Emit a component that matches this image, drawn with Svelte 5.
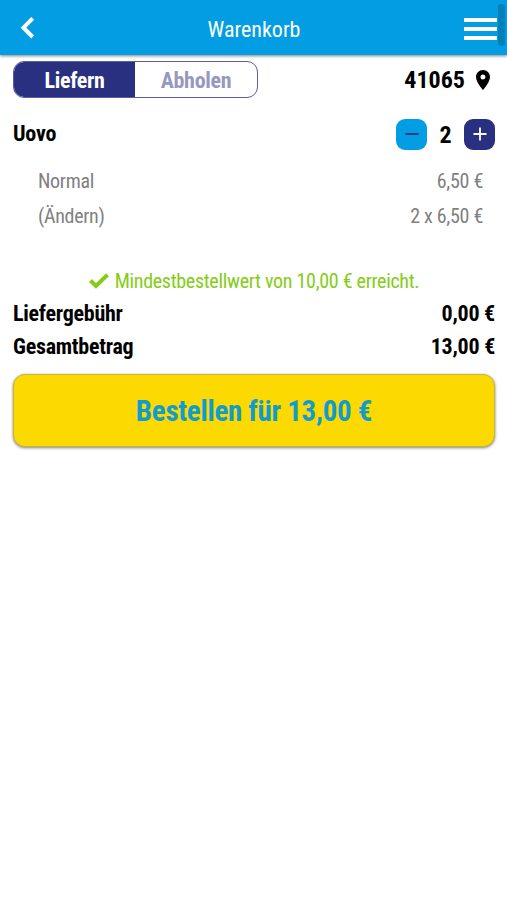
<script>
  let price = 6.5
  let count = $state(2)
  let mode = $state('deliver')
  let total = $derived(count * price)

  function euro(value) {
    return value.toFixed(2).replace('.', ',') + ' €'
  }
</script>

<div class="page">
  <header>
    <button class="back" aria-label="Zurück">
      <svg width="15" height="22" viewBox="0 0 15 22">
        <path d="M12.7 1.3L3.5 10.7L12.7 20" fill="none" stroke="#fff" stroke-width="4" />
      </svg>
    </button>
    <h1>Warenkorb</h1>
    <button class="menu" aria-label="Menü">
      <span></span>
      <span></span>
      <span></span>
    </button>
    <div class="scrollbar"></div>
  </header>

  <main>
    <div class="top">
      <div class="switch">
        <button class:active={mode == 'deliver'} onclick={() => mode = 'deliver'}>Liefern</button>
        <button class:active={mode == 'pickup'} onclick={() => mode = 'pickup'}>Abholen</button>
      </div>
      <div class="zip">
        <span>41065</span>
        <svg width="14" height="20" viewBox="5 2 14 20" preserveAspectRatio="none">
          <path d="M12 2C8.13 2 5 5.13 5 9c0 5.25 7 13 7 13s7-7.75 7-13c0-3.87-3.13-7-7-7zm0 9.5a2.5 2.5 0 1 1 0-5 2.5 2.5 0 0 1 0 5z" />
        </svg>
      </div>
    </div>

    <div class="item">
      <span class="name">Uovo</span>
      <div class="stepper">
        <button class="minus" aria-label="Weniger" onclick={() => count = Math.max(0, count - 1)}>
          <svg width="14" height="14" viewBox="0 0 14 14"><path d="M.5 7H13.5" /></svg>
        </button>
        <span class="count">{count}</span>
        <button class="plus" aria-label="Mehr" onclick={() => count++}>
          <svg width="14" height="14" viewBox="0 0 14 14"><path d="M.5 7H13.5M7 .5V13.5" /></svg>
        </button>
      </div>
    </div>
    <div class="detail">
      <span>Normal</span>
      <span>{euro(price)}</span>
    </div>
    <div class="detail">
      <span>(Ändern)</span>
      <span>{count} x {euro(price)}</span>
    </div>

    <div class="notice">
      <svg width="20" height="16" viewBox="0 0 20 16">
        <path d="M1.5 7.5L7 13L18.5 1.8" fill="none" stroke="#84cc16" stroke-width="4" />
      </svg>
      <span>Mindestbestellwert von 10,00 € erreicht.</span>
    </div>

    <div class="sum">
      <span>Liefergebühr</span>
      <span>{euro(0)}</span>
    </div>
    <div class="sum">
      <span>Gesamtbetrag</span>
      <span>{euro(total)}</span>
    </div>

    <button class="order">Bestellen für {euro(total)}</button>
  </main>
</div>

<style>
  :global(body) {
    background: #fff;
  }

  .page {
    min-height: 100vh;
    font-family: 'Roboto Condensed', Roboto, sans-serif;
    font-stretch: condensed;
    color: #000;
  }

  button {
    padding: 0;
    border: 0;
    background: none;
    font: inherit;
    letter-spacing: inherit;
    cursor: pointer;
  }

  svg {
    display: block;
  }

  header {
    position: relative;
    display: grid;
    grid-template-columns: 60px 1fr 60px;
    align-items: center;
    height: 55px;
    background: #029de2;
    box-shadow: 0 1px 3px rgba(0, 0, 0, 0.5);
  }

  .back {
    padding: 1px 0 0 20px;
    justify-self: start;
  }

  h1 {
    margin: 0;
    padding: 4px 0 0 1px;
    color: #fff;
    font-size: 22px;
    font-weight: 400;
    line-height: 26px;
    text-align: center;
  }

  .menu {
    display: flex;
    flex-direction: column;
    gap: 5px;
    width: 33px;
    margin: 2px 0 0 17px;
  }

  .menu span {
    height: 4px;
    background: #fff;
  }

  .scrollbar {
    position: absolute;
    top: 4px;
    right: 2px;
    width: 7px;
    height: 42px;
    border-radius: 3px;
    background: #0280b9;
  }

  main {
    padding: 6px 12px 0 13px;
  }

  .top,
  .item,
  .detail,
  .sum {
    display: flex;
    justify-content: space-between;
    align-items: center;
  }

  .switch {
    display: grid;
    grid-template-columns: 121px 1fr;
    box-sizing: border-box;
    width: 245px;
    height: 37px;
    border: 1px solid #5d5c9e;
    border-radius: 11px;
    overflow: hidden;
    letter-spacing: -0.3px;
  }

  .switch button {
    padding-top: 2px;
    color: #9698bf;
    font-size: 22px;
    font-weight: 700;
  }

  .switch .active {
    background: #28307f;
    color: #fff;
  }

  .zip {
    display: flex;
    align-items: center;
    gap: 11px;
    padding-right: 5px;
    font-size: 24px;
    font-weight: 700;
  }

  .item {
    height: 32px;
    margin-top: 20px;
    font-size: 22px;
    font-weight: 700;
  }

  .name {
    padding-bottom: 2px;
    letter-spacing: -0.2px;
  }

  .stepper {
    display: flex;
    align-items: center;
  }

  .stepper button {
    display: grid;
    place-items: center;
    width: 31px;
    height: 31px;
    border-radius: 9px;
  }

  .minus {
    background: #029de2;
    stroke: #28307f;
  }

  .plus {
    background: #28307f;
    stroke: #fff;
  }

  .stepper path {
    stroke-width: 1.8;
  }

  .count {
    width: 37px;
    padding-top: 2px;
    font-size: 24px;
    text-align: center;
  }

  .detail {
    height: 35px;
    padding: 0 12px 0 25px;
    color: #808080;
    font-size: 20px;
    letter-spacing: -0.3px;
  }

  .item + .detail {
    margin-top: 13px;
  }

  .notice {
    display: flex;
    align-items: center;
    justify-content: center;
    gap: 6px;
    height: 33px;
    margin-top: 31px;
    color: #84cc16;
    font-size: 20px;
    letter-spacing: -0.3px;
  }

  .sum {
    height: 33px;
    font-size: 22px;
    font-weight: 700;
    letter-spacing: -0.25px;
  }

  .order {
    display: block;
    box-sizing: border-box;
    width: 100%;
    height: 73px;
    margin-top: 11px;
    padding-top: 1px;
    border: 1px solid #c8b437;
    border-radius: 12px;
    background: #fcd900;
    box-shadow: 0 1px 3px rgba(0, 0, 0, 0.5);
    color: #129ccb;
    font-size: 29px;
    font-weight: 700;
    letter-spacing: -0.3px;
  }
</style>
